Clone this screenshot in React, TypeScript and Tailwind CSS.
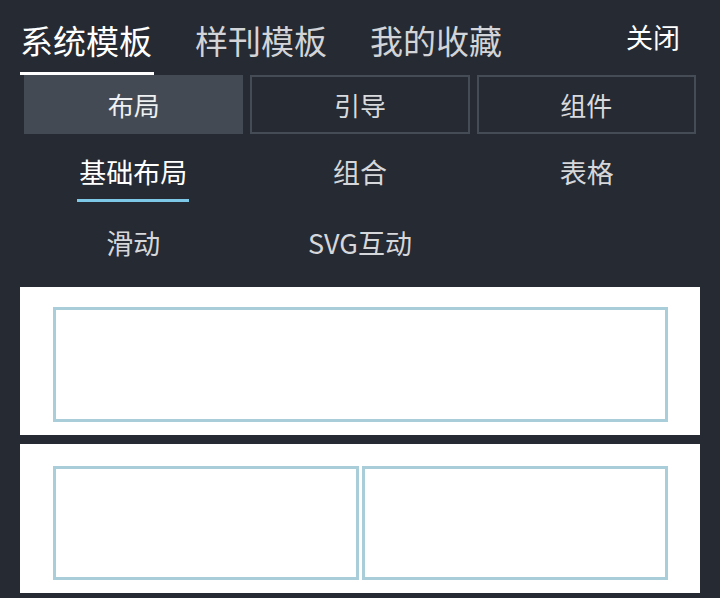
import React from "react";

const font = { fontFamily: '"Noto Sans CJK SC", "Noto Sans", sans-serif' };

export default function App() {
  return (
    <div className="w-[720px] h-[598px] bg-[#262a33] overflow-hidden" style={font}>
      {/* header tabs */}
      <div className="flex items-start h-[75px] pt-[20px] pl-[20px] pr-[40px]">
        <div className="w-[175px] flex flex-col">
          <span className="text-[33px] leading-[40px] text-white">系统模板</span>
          <div className="w-[134px] h-[3px] bg-white mt-[12px]" />
        </div>
        <div className="w-[175px]">
          <span className="text-[33px] leading-[40px] text-[#d2d4d7]">样刊模板</span>
        </div>
        <div className="w-[175px]">
          <span className="text-[33px] leading-[40px] text-[#d2d4d7]">我的收藏</span>
        </div>
        <div className="ml-auto">
          <span className="text-[27px] leading-[34px] text-white">关闭</span>
        </div>
      </div>

      {/* category buttons */}
      <div className="grid grid-cols-3 gap-[7px] px-[24px] mt-0">
        <div className="h-[59px] bg-[#434a54] flex items-center justify-center text-[26px] text-[#eef0f2]">布局</div>
        <div className="h-[59px] border-2 border-[#464c55] flex items-center justify-center text-[26px] text-[#d8dadd]">引导</div>
        <div className="h-[59px] border-2 border-[#464c55] flex items-center justify-center text-[26px] text-[#d8dadd]">组件</div>
      </div>

      {/* sub tabs */}
      <div className="grid grid-cols-3 px-[20px] pt-[18px]">
        <div className="flex flex-col items-center">
          <span className="text-[27px] leading-[40px] text-white">基础布局</span>
          <div className="w-[112px] h-[3px] bg-[#7cc8e6] mt-[7px]" />
        </div>
        <div className="flex flex-col items-center">
          <span className="text-[27px] leading-[40px] text-[#d5d7da]">组合</span>
        </div>
        <div className="flex flex-col items-center">
          <span className="text-[27px] leading-[40px] text-[#d5d7da]">表格</span>
        </div>
        <div className="flex flex-col items-center mt-[21px]">
          <span className="text-[27px] leading-[40px] text-[#d5d7da]">滑动</span>
        </div>
        <div className="flex flex-col items-center mt-[21px]">
          <span className="text-[27px] leading-[40px] text-[#d5d7da]">SVG互动</span>
        </div>
        <div />
      </div>

      {/* cards */}
      <div className="px-[20px] mt-[24px] flex flex-col gap-[9px]">
        <div className="h-[148px] bg-white pl-[33px] pr-[32px] pt-[20px] pb-[13px]">
          <div className="h-full border-[3px] border-[#a9cdd9]" />
        </div>
        <div className="h-[149px] bg-white pl-[33px] pr-[32px] pt-[22px] pb-[13px] flex gap-[3px]">
          <div className="flex-1 h-full border-[3px] border-[#a9cdd9]" />
          <div className="flex-1 h-full border-[3px] border-[#a9cdd9]" />
        </div>
      </div>
    </div>
  );
}
